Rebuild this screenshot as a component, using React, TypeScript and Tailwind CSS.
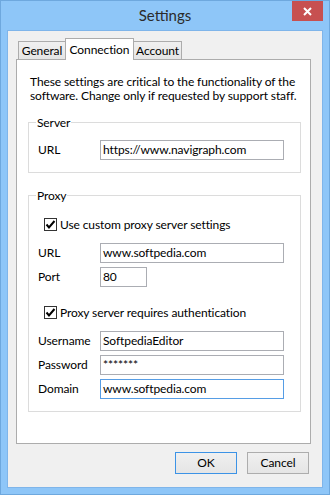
import React from 'react'

const font = "font-['Lato','Liberation_Sans',sans-serif] tracking-[-0.1px]"

const CheckBox = ({ label }: { label: string }) => (
  <div className="flex items-center h-[13px]">
    <div className="w-[13px] h-[13px] border border-[#333333] bg-white flex items-center justify-center">
      <svg width="11" height="11" viewBox="0 0 11 11">
        <path d="M1.5 5.5 L4 8.5 L9.5 2" fill="none" stroke="#000" strokeWidth="2" />
      </svg>
    </div>
    <span className="ml-[3px] text-[12px] leading-[13px] text-black whitespace-nowrap">{label}</span>
  </div>
)

const Field = ({
  label,
  value,
  width = 'w-[184px]',
  focused = false,
}: {
  label: string
  value: string
  width?: string
  focused?: boolean
}) => (
  <div className="flex items-center h-[20px]">
    <span className="w-[62px] text-[12px] text-black">{label}</span>
    <div
      className={`${width} h-[20px] border bg-white flex items-center pl-[2px] text-[12px] text-black whitespace-nowrap ${
        focused ? 'border-[#569de5]' : 'border-[#abadb3]'
      }`}
    >
      {value}
    </div>
  </div>
)

const App = () => {
  return (
    <div className={`relative w-[330px] h-[495px] bg-[#8ec6f8] border border-[#6ea8de] ${font}`}>
      {/* Title bar */}
      <div className="h-[29px] flex items-center justify-center text-[15px] text-[#2b2b2b] tracking-normal">
        Settings
      </div>
      <div className="absolute top-0 right-[6px] w-[31px] h-[20px] bg-[#c75050] flex items-center justify-center">
        <svg width="9" height="9" viewBox="0 0 9 9">
          <path d="M1 1 L8 8 M8 1 L1 8" stroke="#fff" strokeWidth="2" />
        </svg>
      </div>

      {/* Client area */}
      <div className="mx-[6px] h-[458px] border border-[#7fb5ea] bg-[#f0f0f0] flex flex-col">
        {/* Tabs */}
        <div className="flex items-end h-[21px] mt-[7px] ml-[10px] text-[12px] text-black">
          <div className="w-[47px] h-[18px] border border-b-0 border-r-0 border-[#acacac] bg-gradient-to-b from-[#f0f0f0] to-[#e5e5e5] flex items-center justify-center">
            General
          </div>
          <div className="relative z-10 -mb-px w-[69px] h-[22px] border border-b-0 border-[#acacac] bg-white flex items-start justify-center pt-[2px]">
            Connection
          </div>
          <div className="w-[48px] h-[18px] border border-b-0 border-l-0 border-[#acacac] bg-gradient-to-b from-[#f0f0f0] to-[#e5e5e5] flex items-center justify-center">
            Account
          </div>
        </div>

        {/* Tab panel */}
        <div className="ml-[8px] w-[295px] h-[385px] border border-[#acacac] bg-white flex flex-col">
          <p className="mt-[15px] pl-[13px] text-[12px] leading-[14px] text-black whitespace-nowrap">
            These settings are critical to the functionality of the
            <br />
            software. Change only if requested by support staff.
          </p>

          <fieldset className="mt-[13px] ml-[11px] w-[273px] border border-[#dcdcdc] pl-[9px] pb-[12px]">
            <legend className="ml-[-2px] px-[1px] text-[12px] leading-[13px] text-black">Server</legend>
            <div className="mt-[11px]">
              <Field label="URL" value="https://www.navigraph.com" />
            </div>
          </fieldset>

          <fieldset className="mt-[16px] ml-[11px] w-[273px] border border-[#dcdcdc] pl-[9px] pb-[12px]">
            <legend className="ml-[-2px] px-[1px] text-[12px] leading-[13px] text-black">Proxy</legend>
            <div className="mt-[16px] pl-[6px]">
              <CheckBox label="Use custom proxy server settings" />
            </div>
            <div className="mt-[12px] flex flex-col gap-[4px]">
              <Field label="URL" value="www.softpedia.com" />
              <Field label="Port" value="80" width="w-[47px]" />
            </div>
            <div className="mt-[19px] pl-[6px]">
              <CheckBox label="Proxy server requires authentication" />
            </div>
            <div className="mt-[12px] flex flex-col gap-[4px]">
              <Field label="Username" value="SoftpediaEditor" />
              <Field label="Password" value="*******" />
              <Field label="Domain" value="www.softpedia.com" focused />
            </div>
          </fieldset>
        </div>

        {/* Buttons */}
        <div className="mt-[8px] flex justify-end gap-[10px] pr-[13px] text-[12px] text-black">
          <button className="w-[62px] h-[22px] border border-[#3c93e6] bg-gradient-to-b from-[#f0f0f0] to-[#e5e5e5]">
            OK
          </button>
          <button className="w-[62px] h-[22px] border border-[#adadad] bg-gradient-to-b from-[#f0f0f0] to-[#e5e5e5]">
            Cancel
          </button>
        </div>
      </div>
    </div>
  )
}

export default App
